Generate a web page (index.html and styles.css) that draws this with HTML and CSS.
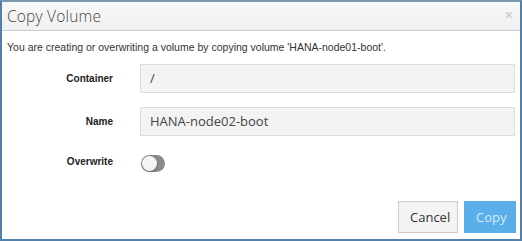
FILE: index.html
```html
<!DOCTYPE html>
<html>

<head>
    <meta charset="utf-8">
    <link rel="stylesheet" href="styles.css">
</head>

<body>
    <div class="modal">
        <div class="modal-header">
            <h1>Copy Volume</h1>
            <span class="close">&times;</span>
        </div>

        <div class="modal-body">
            <p class="intro">You are creating or overwriting a volume by copying volume 'HANA-node01-boot'.</p>

            <div class="form-grid">
                <label class="form-label">Container</label>
                <div class="form-input">/</div>

                <label class="form-label">Name</label>
                <div class="form-input">HANA-node02-boot</div>

                <label class="form-label">Overwrite</label>
                <div class="toggle">
                    <span class="toggle-knob"></span>
                </div>
            </div>
        </div>

        <div class="modal-footer">
            <button class="btn btn-default">Cancel</button>
            <button class="btn btn-primary">Copy</button>
        </div>
    </div>
</body>

</html>
```

FILE: styles.css
```css
* {
    margin: 0;
    padding: 0;
    box-sizing: border-box;
}

body {
    width: 522px;
    height: 241px;
    font-family: 'Liberation Sans', Arial, sans-serif;
    color: #333333;
    background: #ffffff;
}

.modal {
    width: 522px;
    height: 241px;
    border: 2px solid #5380ab;
    border-top-color: #7d97b3;
    display: flex;
    flex-direction: column;
}

.modal-header {
    height: 29px;
    display: flex;
    align-items: center;
    justify-content: space-between;
    padding: 0 7px 0 5px;
    background: linear-gradient(#f7f7f7, #f1f1f1);
    border-bottom: 1px solid #c9ced4;
}

.modal-header h1 {
    font-family: 'Open Sans', sans-serif;
    font-size: 15.5px;
    font-weight: 300;
    color: #444444;
    letter-spacing: 0.2px;
}

.close {
    font-size: 14px;
    color: #c4c4c4;
    margin-top: -2px;
}

.modal-body {
    padding: 9px 5px 0 5px;
}

.intro {
    font-size: 10.5px;
    line-height: 14px;
    color: #333333;
}

.form-grid {
    display: grid;
    grid-template-columns: 106px 1fr;
    column-gap: 27px;
    row-gap: 14px;
    align-items: center;
    margin-top: 10px;
}

.form-label {
    text-align: right;
    font-size: 10px;
    font-weight: 700;
    color: #222222;
}

.form-input {
    height: 29px;
    line-height: 27px;
    padding: 0 9px;
    font-family: 'Open Sans', sans-serif;
    font-size: 13px;
    color: #444444;
    background: #f3f3f3;
    border: 1px solid #dcdcdc;
}

.toggle {
    position: relative;
    width: 24px;
    height: 17px;
    margin-top: 5px;
    margin-left: 1px;
    border-radius: 9px;
    background: #8a8a8a;
}

.toggle-knob {
    position: absolute;
    left: 1px;
    top: 1px;
    width: 15px;
    height: 15px;
    border-radius: 50%;
    background: #f4f4f4;
    box-shadow: 0 1px 2px rgba(0, 0, 0, 0.3);
}

.modal-footer {
    margin-top: auto;
    display: flex;
    justify-content: flex-end;
    gap: 6px;
    padding: 0 4px 6px 0;
}

.btn {
    height: 32px;
    padding: 0 11px;
    font-family: 'Open Sans', sans-serif;
    font-size: 13px;
    border: 1px solid #cccccc;
}

.btn-default {
    width: 60px;
    background: #f3f3f3;
    color: #333333;
}

.btn-primary {
    width: 52px;
    background: #5aaeea;
    border-color: #5aaeea;
    color: #d6ebfa;
}
```
